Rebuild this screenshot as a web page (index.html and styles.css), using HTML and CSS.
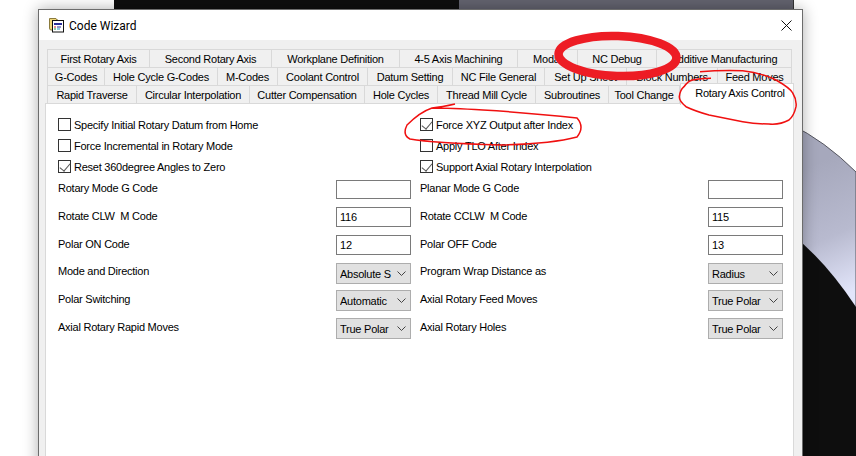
FILE: index.html
```html
<!DOCTYPE html>
<html lang="en">
<head>
<meta charset="utf-8">
<title>Code Wizard</title>
<link rel="stylesheet" href="styles.css">
</head>
<body>
<div class="desk">
  <svg class="backdrop" width="856" height="456" viewBox="0 0 856 456">
    <defs>
      <linearGradient id="metal" gradientUnits="userSpaceOnUse" x1="802" y1="170" x2="856" y2="290">
        <stop offset="0" stop-color="#a6a8bc"/>
        <stop offset=".55" stop-color="#b8bacf"/>
        <stop offset="1" stop-color="#e2e5fa"/>
      </linearGradient>
    </defs>
    <rect width="856" height="456" fill="#fff"/>
    <rect x="114" width="345" height="12" fill="#0e0e0e"/>
    <rect x="459" width="335" height="12" fill="#63636f"/>
    <rect x="793" width="1" height="12" fill="#333"/>
    <path d="M790 124 Q825 141 856 172 V456 H790 Z" fill="url(#metal)" stroke="#55565f" stroke-width="1"/>
    <path d="M790 233 Q825 260 856 307 V456 H790 Z" fill="#0e0e0e"/>
  </svg>

  <section class="window">
    <header class="titlebar">
      <svg class="app-icon" width="16" height="16" viewBox="0 0 16 16">
        <path d="M1.500 1.500H8L9 3H10V13H3Q1.500 13 1.500 11Z" fill="#f0d77a" stroke="#8a7a3c"/>
        <rect x="4.500" y="3.500" width="11" height="11.500" fill="#fff" stroke="#111"/>
        <rect x="6" y="6" width="8" height="2" fill="#2a2f9a"/>
        <rect x="6" y="9.500" width="2" height="1" fill="#d02020"/>
        <rect x="9" y="9.500" width="4" height="1" fill="#2a2f9a"/>
        <rect x="6" y="11.500" width="2" height="1" fill="#18a040"/>
        <rect x="9" y="11.500" width="3" height="1" fill="#20a0c0"/>
      </svg>
      <h1 class="title">Code Wizard</h1>
      <svg class="close" width="11" height="11" viewBox="0 0 11 11">
        <path d="M.5 .5L10.500 10.500M10.500 .5L.5 10.500" stroke="#111" stroke-width="1" fill="none"/>
      </svg>
    </header>

    <div class="dialog">
      <div class="tabs">
        <div class="tab-row row-a">
          <span class="tab">First Rotary Axis</span>
          <span class="tab">Second Rotary Axis</span>
          <span class="tab">Workplane Definition</span>
          <span class="tab">4-5 Axis Machining</span>
          <span class="tab">Modal</span>
          <span class="tab">NC Debug</span>
          <span class="tab">Additive Manufacturing</span>
        </div>
        <div class="tab-row row-b">
          <span class="tab">G-Codes</span>
          <span class="tab">Hole Cycle G-Codes</span>
          <span class="tab">M-Codes</span>
          <span class="tab">Coolant Control</span>
          <span class="tab">Datum Setting</span>
          <span class="tab">NC File General</span>
          <span class="tab">Set Up Sheet</span>
          <span class="tab">Block Numbers</span>
          <span class="tab">Feed Moves</span>
        </div>
        <div class="tab-row row-c">
          <span class="tab">Rapid Traverse</span>
          <span class="tab">Circular Interpolation</span>
          <span class="tab">Cutter Compensation</span>
          <span class="tab">Hole Cycles</span>
          <span class="tab">Thread Mill Cycle</span>
          <span class="tab">Subroutines</span>
          <span class="tab">Tool Change</span>
          <span class="tab active">Rotary Axis Control</span>
        </div>
      </div>

      <div class="panel">
        <form class="form">
          <label class="check"><input type="checkbox"><span>Specify Initial Rotary Datum from Home</span></label>
          <label class="check right"><input type="checkbox" checked><span>Force XYZ Output after Index</span></label>
          <label class="check"><input type="checkbox"><span>Force Incremental in Rotary Mode</span></label>
          <label class="check right"><input type="checkbox"><span>Apply TLO After Index</span></label>
          <label class="check"><input type="checkbox" checked><span>Reset 360degree Angles to Zero</span></label>
          <label class="check right"><input type="checkbox" checked><span>Support Axial Rotary Interpolation</span></label>

          <span class="lbl">Rotary Mode G Code</span>
          <input class="field blank" type="text">
          <span class="lbl right-lbl">Planar Mode G Code</span>
          <input class="field blank" type="text">

          <span class="lbl low">Rotate CLW&nbsp; M Code</span>
          <input class="field" type="text" value="116">
          <span class="lbl low right-lbl">Rotate CCLW&nbsp; M Code</span>
          <input class="field" type="text" value="115">

          <span class="lbl low">Polar ON Code</span>
          <input class="field" type="text" value="12">
          <span class="lbl low right-lbl">Polar OFF Code</span>
          <input class="field" type="text" value="13">

          <span class="lbl">Mode and Direction</span>
          <div class="combo"><select><option>Absolute S</option></select><svg class="chev" width="9" height="5" viewBox="0 0 9 5"><path d="M.5 .5L4.500 4.500L8.500 .5" fill="none" stroke="#444"/></svg></div>
          <span class="lbl right-lbl">Program Wrap Distance as</span>
          <div class="combo"><select><option>Radius</option></select><svg class="chev" width="9" height="5" viewBox="0 0 9 5"><path d="M.5 .5L4.500 4.500L8.500 .5" fill="none" stroke="#444"/></svg></div>

          <span class="lbl low">Polar Switching</span>
          <div class="combo"><select><option>Automatic</option></select><svg class="chev" width="9" height="5" viewBox="0 0 9 5"><path d="M.5 .5L4.500 4.500L8.500 .5" fill="none" stroke="#444"/></svg></div>
          <span class="lbl low right-lbl">Axial Rotary Feed Moves</span>
          <div class="combo"><select><option>True Polar</option></select><svg class="chev" width="9" height="5" viewBox="0 0 9 5"><path d="M.5 .5L4.500 4.500L8.500 .5" fill="none" stroke="#444"/></svg></div>

          <span class="lbl low">Axial Rotary Rapid Moves</span>
          <div class="combo"><select><option>True Polar</option></select><svg class="chev" width="9" height="5" viewBox="0 0 9 5"><path d="M.5 .5L4.500 4.500L8.500 .5" fill="none" stroke="#444"/></svg></div>
          <span class="lbl low right-lbl">Axial Rotary Holes</span>
          <div class="combo"><select><option>True Polar</option></select><svg class="chev" width="9" height="5" viewBox="0 0 9 5"><path d="M.5 .5L4.500 4.500L8.500 .5" fill="none" stroke="#444"/></svg></div>
        </form>
      </div>
    </div>
  </section>

  <svg class="markup" width="856" height="456" viewBox="0 0 856 456">
    <ellipse cx="617.500" cy="56" rx="59" ry="20" transform="rotate(2 617.500 56)" fill="none" stroke="#ed1c24" stroke-width="8.500"/>
    <path d="M455 104 Q442 107 432 108 Q420 112 407 125 Q402 135 410 139 Q433 143 500 145 Q550 144 577 137 Q585 127 577 118 Q533 113 483 110 Q450 108 432 108" fill="none" stroke="#f01010" stroke-width="1.500"/>
    <path d="M700 71.700 Q720 70 742.700 70.700 Q762 73 776 80 Q790 88 792.700 93 Q797 100 796 106.700 Q794 116 789 120 Q780 125 769 124 Q755 124 742.700 121.700 L709 115 Q695 111 686 106.700 Q679 101 679.300 96.700 Q680 90 684 86.700 Q688 81 692.700 80 Q700 78.500 711 78.300" fill="none" stroke="#f01010" stroke-width="1.500"/>
  </svg>
</div>
</body>
</html>
```
FILE: styles.css
```css
* { box-sizing: border-box; }

html, body {
  margin: 0;
  padding: 0;
  background: #fff;
}

.desk {
  position: relative;
  width: 856px;
  height: 456px;
  overflow: hidden;
  font-family: "Liberation Sans", Arial, sans-serif;
  font-size: 11px;
  letter-spacing: -.24px;
  color: #000;
}

.backdrop, .markup {
  position: absolute;
  left: 0;
  top: 0;
  display: block;
}

.markup {
  z-index: 2;
  pointer-events: none;
}

.window {
  position: absolute;
  left: 38px;
  top: 9px;
  width: 765px;
  height: 480px;
  background: #f0f0f0;
  border: 1px solid #6c6c6c;
  box-shadow: 0 0 14px rgba(0, 0, 0, .32);
}

.titlebar {
  display: flex;
  align-items: center;
  height: 30px;
  padding: 0 10px 0 9px;
  background: #fff;
}

.app-icon { flex: none; }

.title {
  flex: 1;
  margin: 1px 0 0 5px;
  font-family: Roboto, sans-serif;
  font-size: 12px;
  font-weight: 400;
  letter-spacing: 0;
}

.dialog { padding: 9px 8px 0 6px; }

.tabs {
  position: relative;
  z-index: 1;
  margin-left: 2px;
}

.tab-row {
  display: grid;
  height: 18px;
}

.row-a { grid-template-columns: 103px 122px 128px 118px 60px 79px 135px; }
.row-b { grid-template-columns: 58px 113px 60px 90px 85px 92px 82px 91px 74px; }
.row-c { grid-template-columns: 90px 113px 115px 73px 98px 73px 71px 114px; }

.tab {
  display: flex;
  align-items: center;
  justify-content: center;
  height: 18px;
  padding-top: 1px;
  background: #f0f0f0;
  border-top: 1px solid #d9d9d9;
  border-right: 1px solid #d9d9d9;
  white-space: nowrap;
}

.tab:first-child { border-left: 1px solid #d9d9d9; }

.tab.active {
  height: 22px;
  margin-top: -2px;
  padding: 0 0 4px 6px;
  background: #fff;
  border-left: 1px solid #d9d9d9;
}

.panel {
  height: 360px;
  padding: 10px 0 0 12px;
  background: #fff;
  border: 1px solid #d9d9d9;
}

.form {
  display: grid;
  grid-template-columns: 278px 75px 297px 75px;
  grid-template-rows: 21px 21px 24px 27px 28px 28px 27px 28px 28px;
}

.check {
  grid-column: 1 / span 2;
  display: flex;
  align-items: center;
  gap: 3px;
  height: 21px;
}

.check.right {
  grid-column: 3 / span 2;
  padding-left: 9px;
}

.check input {
  appearance: none;
  position: relative;
  flex: none;
  width: 13px;
  height: 13px;
  margin: 0;
  background: #fff;
  border: 1px solid #333;
  border-radius: 0;
}

.check input:checked::after {
  content: "";
  position: absolute;
  left: 3px;
  top: 0;
  width: 5px;
  height: 9px;
  border-right: 1px solid #555;
  border-bottom: 1px solid #555;
  transform: rotate(40deg);
}

.lbl {
  height: 16px;
  line-height: 16px;
  white-space: nowrap;
}

.lbl.low { margin-top: 1px; }

.right-lbl { padding-left: 9px; }

.field {
  width: 75px;
  height: 20px;
  margin: 0;
  padding: 0 3px;
  background: #fff;
  border: 1px solid #7a7a7a;
  border-radius: 0;
  outline: none;
  font: inherit;
  letter-spacing: inherit;
  color: #000;
}

.field.blank { height: 19px; }

.combo {
  position: relative;
  width: 75px;
  height: 21px;
}

.combo select {
  appearance: none;
  display: block;
  width: 75px;
  height: 21px;
  margin: 0;
  padding: 0 0 0 3px;
  background: #e1e1e1;
  border: 1px solid #adadad;
  border-radius: 0;
  font: inherit;
  letter-spacing: inherit;
  color: #000;
}

.chev {
  position: absolute;
  right: 5px;
  top: 8px;
}
```
